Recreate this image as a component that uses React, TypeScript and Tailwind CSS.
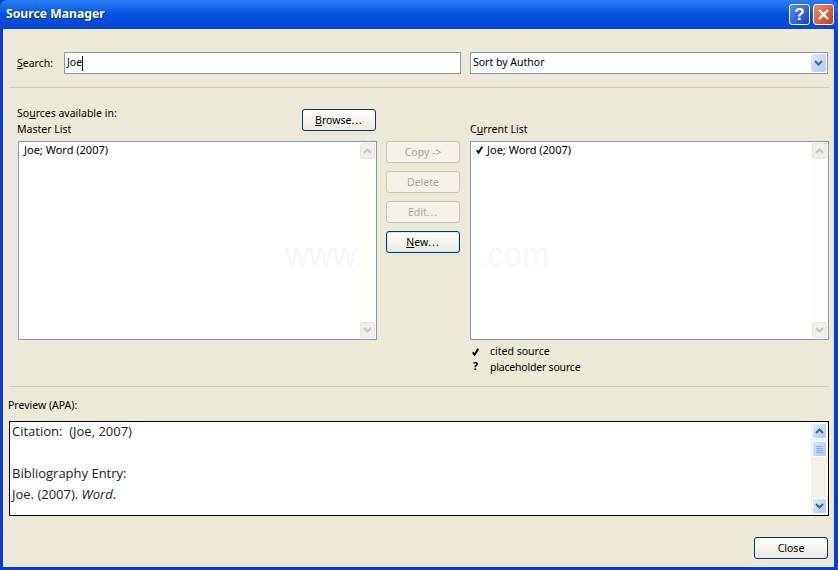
const ui = { fontFamily: '"Noto Sans", sans-serif' };

function Chevron({ down, color }: { down?: boolean; color: string }) {
  return (
    <svg width="9" height="6" viewBox="0 0 9 6">
      <path d={down ? "M1 1 L4.5 4.5 L8 1" : "M1 5 L4.5 1.5 L8 5"} fill="none" stroke={color} strokeWidth="2" />
    </svg>
  );
}

function Check() {
  return (
    <svg width="7" height="8" viewBox="0 0 7 8" className="shrink-0">
      <path d="M0.8 4.2 L2.5 6.8 L6.2 0.8" fill="none" stroke="#000" strokeWidth="1.9" />
    </svg>
  );
}

function ScrollButton({ down, active }: { down?: boolean; active?: boolean }) {
  return (
    <div
      className={
        active
          ? "w-[15px] h-[16px] flex items-center justify-center rounded-[2px] border border-white bg-gradient-to-br from-[#e1eafe] to-[#aec8f7]"
          : "w-[15px] h-[16px] flex items-center justify-center rounded-[2px] border border-[#e8e6dc] bg-[#f0efe8]"
      }
    >
      <Chevron down={down} color={active ? "#4d6185" : "#c9c7ba"} />
    </div>
  );
}

function DisabledScrollbar() {
  return (
    <div className="w-[17px] shrink-0 bg-[#fdfdfa] flex flex-col justify-between items-center py-px">
      <ScrollButton />
      <ScrollButton down />
    </div>
  );
}

function ListBox({ check }: { check?: boolean }) {
  return (
    <div className="h-[199px] border border-[#7f9db9] bg-white flex">
      <div className={"flex-1 flex items-center self-start pt-[1px] text-[11px] leading-[14px] text-black " + (check ? "pl-[5px] gap-[4px]" : "pl-[5px]")}>
        {check && <Check />}
        <span>Joe; Word (2007)</span>
      </div>
      <DisabledScrollbar />
    </div>
  );
}

function Button({ children, disabled, strong, className = "" }: { children: React.ReactNode; disabled?: boolean; strong?: boolean; className?: string }) {
  const base = "w-[74px] h-[22px] flex items-center justify-center rounded-[3px] text-[10.5px] leading-none ";
  const look = disabled
    ? "border border-[#c9c7ba] bg-[#f3f1e8] text-[#a9a797] "
    : strong
      ? "border border-[#003c74] bg-gradient-to-b from-white to-[#ebe9df] text-black shadow-[inset_0_0_0_1px_#cee7ff] "
      : "border border-[#003c74] bg-gradient-to-b from-white to-[#ebe9df] text-black ";
  return <div className={base + look + className}>{children}</div>;
}

export default function App() {
  return (
    <div className="w-[838px] h-[570px] bg-[#0a3cd6] flex flex-col overflow-hidden relative" style={ui}>
      <div className="h-[29px] shrink-0 rounded-t-[7px] bg-gradient-to-b from-[#2a7df5] via-[#0252e2] to-[#0546d8] flex items-center pl-[6px] pr-[4px]">
        <span className="text-white text-[12.2px] font-bold [text-shadow:1px_1px_0_#0a2a9a] flex-1">Source Manager</span>
        <div className="flex gap-[3px]">
          <div className="w-[21px] h-[21px] rounded-[3px] border border-white bg-gradient-to-br from-[#5c8cf0] to-[#1040c8] flex items-center justify-center">
            <span className="text-white font-bold text-[17px] leading-none" style={{ fontFamily: '"Liberation Sans", sans-serif' }}>?</span>
          </div>
          <div className="w-[21px] h-[21px] rounded-[3px] border border-white bg-gradient-to-br from-[#ea8a68] to-[#c63a14] flex items-center justify-center">
            <svg width="13" height="13" viewBox="0 0 13 13">
              <path d="M2 2 L11 11 M11 2 L2 11" stroke="white" strokeWidth="2.4" />
            </svg>
          </div>
        </div>
      </div>

      <div className="flex-1 ml-[3px] mr-[4px] mb-[3px] bg-[#ece9d8] relative text-black text-[10.5px] flex flex-col min-h-0">
        <div className="mt-[23px] ml-[14px] flex items-center h-[22px]">
          <span className="w-[47px] pt-[2px]"><u>S</u>earch:</span>
          <div className="w-[397px] h-[22px] border border-[#7f9db9] bg-white flex items-center pl-[2px]">
            <span>Joe</span>
            <span className="w-px h-[15px] bg-black" />
          </div>
          <div className="w-[358px] ml-[9px] h-[22px] border border-[#7f9db9] bg-white flex items-center pl-[2px] pr-px justify-between">
            <span>Sort by Author</span>
            <div className="w-[15px] h-[18px] rounded-[2px] bg-gradient-to-br from-[#dfe8fd] to-[#b3c9f6] flex items-center justify-center">
              <Chevron down color="#4d6185" />
            </div>
          </div>
        </div>

        <div className="mt-[13px] ml-[6px] mr-[5px] h-px bg-[#d0cebf]" />

        <div className="mt-[21px] ml-[14px] flex gap-[9px]">
          <div className="w-[359px] ml-[1px] flex flex-col">
            <div className="h-[32px] flex justify-between -ml-[1px]">
              <div className="leading-[16px] -mt-[4px]">
                <div>So<u>u</u>rces available in:</div>
                <div>Master List</div>
              </div>
              <Button className="mr-[1px]"><span><u>B</u>rowse<span className="tracking-[1px]">...</span></span></Button>
            </div>
            <ListBox />
          </div>
          <div className="w-[74px] pt-[32px] flex flex-col gap-[8px] shrink-0">
            <Button disabled>Copy -&gt;</Button>
            <Button disabled>Delete</Button>
            <Button disabled><span>Edit<span className="tracking-[1px]">...</span></span></Button>
            <Button strong><span><u>N</u>ew<span className="tracking-[1px]">...</span></span></Button>
          </div>
          <div className="w-[359px] ml-[1px] flex flex-col">
            <div className="h-[32px] pt-[12px] leading-[16px]">C<u>u</u>rrent List</div>
            <ListBox check />
            <div className="mt-[4px] ml-[2px]">
              <div className="flex items-center h-[16px]"><span className="w-[18px] flex"><Check /></span><span>cited source</span></div>
              <div className="flex items-center h-[16px]"><span className="w-[18px] font-bold pl-[1px] pb-[2px]">?</span><span className="tracking-[-0.2px]">placeholder source</span></div>
            </div>
          </div>
        </div>

        <div className="mt-[10px] ml-[6px] mr-[5px] h-px bg-[#d0cebf]" />

        <div className="mt-[10px] ml-[5px] leading-[16px]">Preview (APA):</div>
        <div className="mt-[8px] ml-[6px] mr-[5px] h-[95px] border border-black bg-white flex">
          <div className="flex-1 pl-[2px] -mt-px text-[13px] leading-[21px] text-[#1a1a2a]" style={{ fontFamily: '"Open Sans", sans-serif' }}>
            <div>Citation:&nbsp; (Joe, 2007)</div>
            <div>&nbsp;</div>
            <div>Bibliography Entry:</div>
            <div>Joe. (2007). <i>Word</i>.</div>
          </div>
          <div className="w-[17px] shrink-0 bg-[#f4f2e8] flex flex-col items-center py-px">
            <ScrollButton active />
            <div className="w-[15px] h-[16px] mt-[2px] rounded-[2px] border border-white bg-gradient-to-br from-[#d3e0fd] to-[#b4cbf8] flex flex-col items-center justify-center gap-px">
              <div className="w-[7px] h-px bg-[#8fa9e6]" />
              <div className="w-[7px] h-px bg-[#8fa9e6]" />
              <div className="w-[7px] h-px bg-[#8fa9e6]" />
              <div className="w-[7px] h-px bg-[#8fa9e6]" />
            </div>
            <div className="flex-1" />
            <ScrollButton down active />
          </div>
        </div>

        <div className="mt-[21px] mr-[6px] flex justify-end">
          <Button>Close</Button>
        </div>
      </div>

      <div className="absolute left-[285px] top-[235px] text-[33px] leading-[40px] text-[#f7f7f7] pointer-events-none" style={{ fontFamily: '"Liberation Sans", sans-serif' }}>
        www.
      </div>
      <div className="absolute left-[478px] top-[235px] text-[33px] leading-[40px] text-[#f7f7f7] pointer-events-none" style={{ fontFamily: '"Liberation Sans", sans-serif' }}>
        .com
      </div>
    </div>
  );
}
